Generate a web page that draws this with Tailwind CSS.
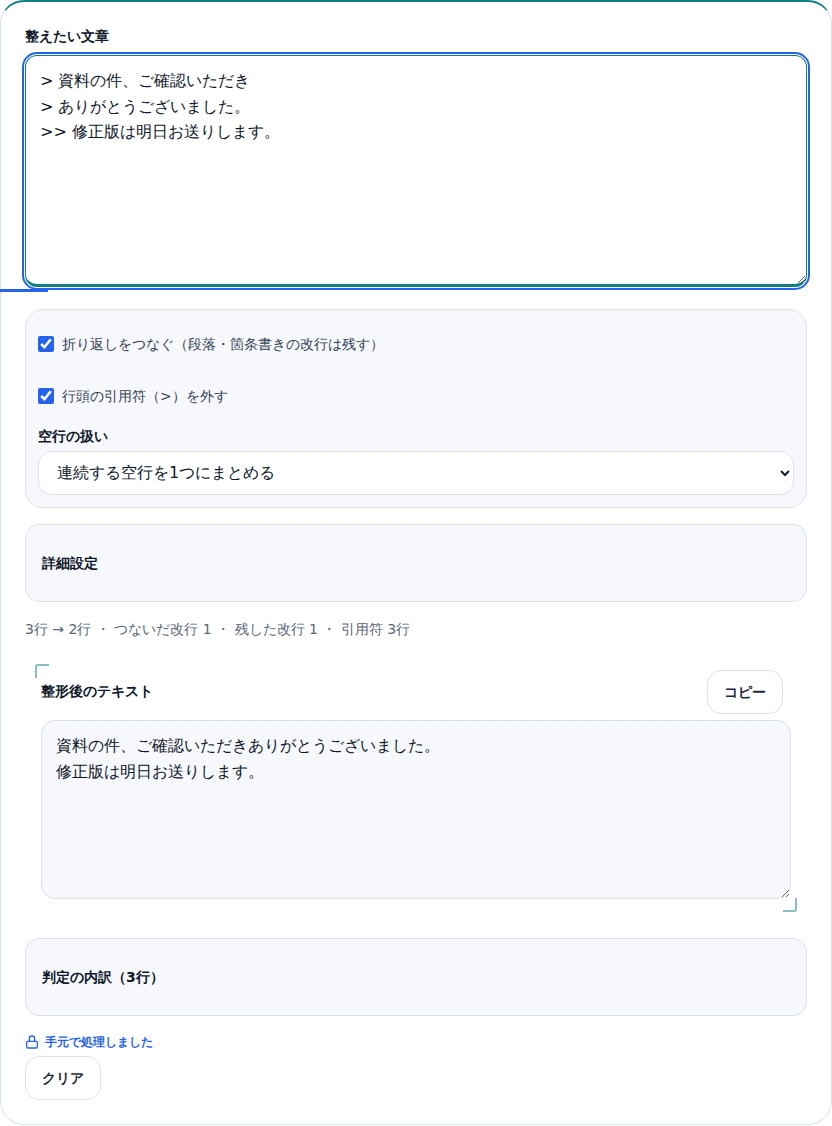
<!DOCTYPE html>
<html lang="ja">
<head>
  <meta charset="UTF-8" />
  <title>改行整形</title>
  <script src="https://cdn.jsdelivr.net/npm/@tailwindcss/browser@4"></script>
</head>
<body class="bg-white font-['DejaVu_Sans',sans-serif] text-[#0f172a]">
  <main class="relative w-[832px] h-[1125px] rounded-[24px] border border-[#d9e2ec] border-t-2 border-t-[#0f7f85] bg-white px-6 pt-[24px]">
    <!-- 入力 -->
    <label for="src" class="block text-[14px] leading-[20px] font-bold mb-[9px]">整えたい文章</label>
    <textarea id="src" readonly class="block w-[782px] h-[232px] resize-y rounded-[12px] border border-[#0f7f85] border-b-[3px] bg-white px-[14px] pt-[12px] pb-[12px] text-[16px] leading-[25.6px] outline-2 outline-offset-1 outline-[#2563eb]">&gt; 資料の件、ご確認いただき
&gt; ありがとうございました。
&gt;&gt; 修正版は明日お送りします。</textarea>
    <div class="absolute left-[-1px] top-[287px] w-[48px] h-[3px] bg-[#2563eb]"></div>

    <!-- オプション -->
    <section class="mt-[22px] h-[199px] rounded-[18px] border border-[#d9e2ec] bg-[#f7f8fc] px-[12px] pt-[12px]">
      <label class="flex items-center gap-[8px] h-[44px] text-[14px] text-[#334155]">
        <input type="checkbox" checked class="w-[16px] h-[16px] accent-[#2563eb]" />折り返しをつなぐ（段落・箇条書きの改行は残す）
      </label>
      <label class="flex items-center gap-[8px] h-[44px] mt-[8px] text-[14px] text-[#334155]">
        <input type="checkbox" checked class="w-[16px] h-[16px] accent-[#2563eb]" />行頭の引用符（&gt;）を外す
      </label>
      <div class="mt-[8px] text-[14px] leading-[20px] font-bold">空行の扱い</div>
      <select class="block mt-[5px] w-[756px] h-[44px] rounded-[14px] border border-[#d9e2ec] bg-white px-[14px] pb-[2px] text-[16px]">
        <option>連続する空行を1つにまとめる</option>
      </select>
    </section>

    <section class="mt-[16px] flex items-center h-[78px] rounded-[14px] border border-[#d9e2ec] bg-[#f7f8fc] px-[16px] text-[14px] font-bold">詳細設定</section>

    <p class="mt-[17px] text-[14px] leading-[20px] text-[#5b6678]">3行 → 2行 ・ つないだ改行 1 ・ 残した改行 1 ・ 引用符 3行</p>

    <!-- 結果 -->
    <section class="relative mt-[31px] mx-[16px]">
      <span class="absolute left-[-6px] top-[-6px] w-[14px] h-[14px] border-l-2 border-t-2 border-[#86bfc4] rounded-tl-[3px]"></span>
      <span class="absolute right-[-6px] top-[228px] w-[14px] h-[14px] border-r-2 border-b-2 border-[#86bfc4] rounded-br-[3px]"></span>
      <div class="flex items-center justify-between h-[44px] pr-[8px]">
        <h2 class="text-[14px] font-bold pb-[2px]">整形後のテキスト</h2>
        <button class="w-[76px] h-[44px] rounded-[14px] border border-[#d9e2ec] bg-white text-[14px] font-bold text-[#1e293b]">コピー</button>
      </div>
      <textarea readonly class="block mt-[6px] w-[750px] h-[179px] resize-y rounded-[14px] border border-[#d9e2ec] bg-[#f7f8fc] px-[14px] pt-[12px] pb-[12px] text-[16px] leading-[25.6px]">資料の件、ご確認いただきありがとうございました。
修正版は明日お送りします。</textarea>
    </section>

    <section class="mt-[39px] flex items-center h-[78px] rounded-[14px] border border-[#d9e2ec] bg-[#f7f8fc] px-[16px] text-[14px] font-bold">判定の内訳（3行）</section>

    <p class="mt-[17px] flex items-center gap-[5px] text-[12px] leading-[18px] font-semibold text-[#2563eb]">
      <svg class="-ml-[1px]" width="16" height="16" viewBox="0 0 24 24" fill="none" stroke="currentColor" stroke-width="2" stroke-linecap="round" stroke-linejoin="round"><rect x="4" y="11" width="16" height="10" rx="2"/><path d="M8 11V7a4 4 0 0 1 8 0v4"/></svg>手元で処理しました
    </p>
    <button class="block mt-[5px] w-[76px] h-[44px] rounded-[14px] border border-[#d9e2ec] bg-white text-[14px] font-bold text-[#1e293b]">クリア</button>
  </main>
</body>
</html>
